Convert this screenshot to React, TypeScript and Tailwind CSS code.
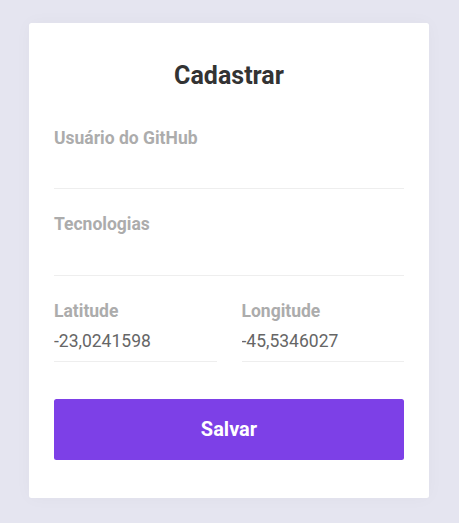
function Field({ label, value }: { label: string; value?: string }) {
  return (
    <div className="flex flex-col">
      <label className="block text-[17.5px] font-bold leading-[20.5px] text-[#acacac]">{label}</label>
      <input
        readOnly
        value={value ?? ''}
        className="h-[41px] w-full border-0 border-b-[1.25px] border-solid border-[#eeeeee] bg-transparent text-[17.5px] text-[#666666] outline-none"
      />
    </div>
  );
}

export default function App() {
  return (
    <div
      className="flex min-h-[523px] bg-[#e5e5f0] pt-[23px] pl-[29px]"
      style={{ fontFamily: 'Roboto, "Liberation Sans", sans-serif' }}
    >
      <aside className="h-fit w-[400px] rounded-[2.5px] bg-white px-[25px] pt-[38px] pb-[37.5px] shadow-[0_0_17px_0_rgba(0,0,0,0.03)]">
        <strong className="block text-center text-[25px] leading-[29.5px] font-bold text-[#333333]">Cadastrar</strong>
        <form className="mt-[37px] flex flex-col">
          <Field label="Usuário do GitHub" />
          <div className="mt-[25px]">
            <Field label="Tecnologias" />
          </div>
          <div className="mt-[25px] grid grid-cols-2 gap-[25px]">
            <Field label="Latitude" value="-23,0241598" />
            <Field label="Longitude" value="-45,5346027" />
          </div>
          <button
            type="button"
            className="mt-[37px] w-full rounded-[2.5px] bg-[#7d40e7] px-[25px] py-[18.75px] text-[20px] leading-[23.5px] font-bold text-white"
          >
            Salvar
          </button>
        </form>
      </aside>
    </div>
  );
}
